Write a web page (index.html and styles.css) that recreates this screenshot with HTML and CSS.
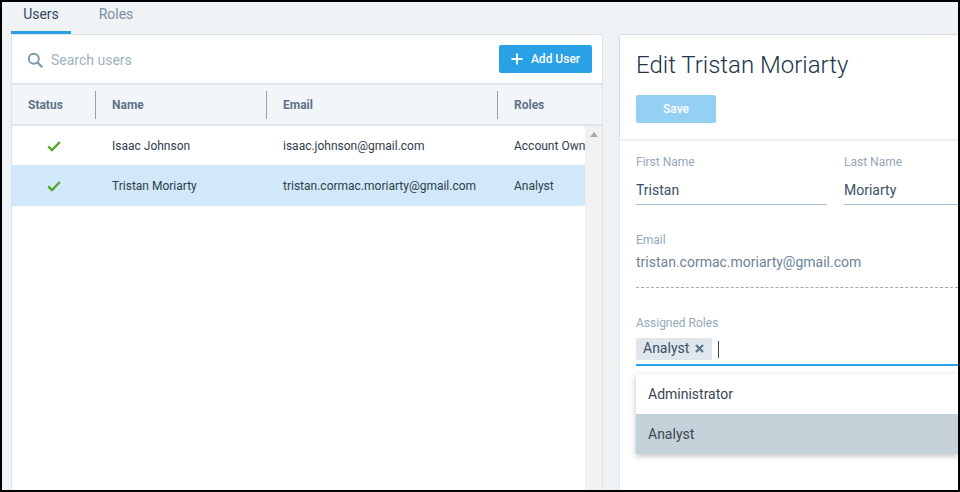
FILE: index.html
```html
<!DOCTYPE html>
<html lang="en">
<head>
<meta charset="utf-8">
<title>Users</title>
<link rel="stylesheet" href="styles.css">
</head>
<body>
<div class="frame">
  <nav class="tabs">
    <a class="tab active">Users</a>
    <a class="tab">Roles</a>
  </nav>
  <main class="columns">
    <section class="list-panel">
      <div class="toolbar">
        <label class="search">
          <svg class="search-icon" width="16" height="16" viewBox="0 0 16 16"><circle cx="6.8" cy="6.8" r="5" fill="none" stroke="#7f9ab0" stroke-width="2"/><path d="M10.6 10.6 L14.6 14.6" stroke="#7f9ab0" stroke-width="2.2" stroke-linecap="round"/></svg>
          <span>Search users</span>
        </label>
        <button class="btn-add">
          <svg width="12" height="12" viewBox="0 0 12 12"><path d="M6 .5v11M.5 6h11" stroke="#fff" stroke-width="1.8"/></svg>
          <span>Add User</span>
        </button>
      </div>
      <div class="grid-head">
        <div class="hcell">Status</div>
        <div class="hcell">Name</div>
        <div class="hcell">Email</div>
        <div class="hcell last">Roles</div>
      </div>
      <div class="grid-body">
        <div class="rows">
          <div class="row">
            <div class="cell status"><svg width="14" height="12" viewBox="0 0 14 12"><path d="M1.2 6.4 L5 10 L12.8 2" fill="none" stroke="#5aa62a" stroke-width="2.4"/></svg></div>
            <div class="cell">Isaac Johnson</div>
            <div class="cell">isaac.johnson@gmail.com</div>
            <div class="cell">Account Owner</div>
          </div>
          <div class="row selected">
            <div class="cell status"><svg width="14" height="12" viewBox="0 0 14 12"><path d="M1.2 6.4 L5 10 L12.8 2" fill="none" stroke="#5aa62a" stroke-width="2.4"/></svg></div>
            <div class="cell">Tristan Moriarty</div>
            <div class="cell">tristan.cormac.moriarty@gmail.com</div>
            <div class="cell">Analyst</div>
          </div>
        </div>
        <div class="scrollbar"><i class="arrow"></i></div>
      </div>
    </section>
    <section class="edit-panel">
      <header class="edit-head">
        <h1>Edit Tristan Moriarty</h1>
        <button class="btn-save">Save</button>
      </header>
      <form class="edit-form">
        <div class="name-row">
          <div class="field first">
            <div class="label">First Name</div>
            <div class="value">Tristan</div>
          </div>
          <div class="field last-name">
            <div class="label">Last Name</div>
            <div class="value">Moriarty</div>
          </div>
        </div>
        <div class="email-field">
          <div class="label">Email</div>
          <div class="value muted">tristan.cormac.moriarty@gmail.com</div>
        </div>
        <div class="roles-field">
          <div class="label">Assigned Roles</div>
          <div class="chips">
            <span class="chip">Analyst <svg width="9" height="9" viewBox="0 0 9 9"><path d="M1 1l7 7M8 1l-7 7" stroke="#5f7890" stroke-width="2.4"/></svg></span>
            <i class="caret"></i>
          </div>
          <ul class="menu">
            <li>Administrator</li>
            <li class="hot">Analyst</li>
          </ul>
        </div>
      </form>
    </section>
  </main>
</div>
</body>
</html>
```
FILE: styles.css
```css
* { box-sizing: border-box; }
html, body { margin: 0; height: 100%; }
body { font-family: Roboto, "Liberation Sans", sans-serif; overflow: hidden; }
.frame {
  width: 960px; height: 492px;
  border: 2px solid #000;
  background: #eff3f5;
  display: flex; flex-direction: column;
  overflow: hidden;
}
.tabs { display: flex; height: 32px; padding-left: 9px; flex: none; }
.tab { width: 60px; height: 32px; font-size: 14px; line-height: 25px; color: #7d8ea3; text-align: center; border-bottom: 3px solid transparent; margin-right: 15px; }
.tab.active { color: #34495e; border-bottom-color: #2aa0e6; }
.columns { flex: 1; display: flex; gap: 16px; padding-left: 9px; min-height: 0; }
.list-panel {
  width: 592px; background: #fff;
  border: 1px solid #dbe4ea; border-bottom: 0;
  display: flex; flex-direction: column;
}
.toolbar { height: 50px; border-bottom: 2px solid #dfe6eb; display: flex; align-items: center; justify-content: space-between; padding: 0 10px 0 16px; flex: none; }
.search { display: flex; align-items: center; gap: 7px; font-size: 14px; color: #9db2c4; padding-top: 1px; }
.search-icon { margin-top: 1px; margin-left: -1px; margin-right: 1px; }
.btn-add { width: 93px; height: 28px; background: #2aa0e6; border: 0; border-radius: 2px; color: #fff; font: 500 12px Roboto, sans-serif; display: flex; align-items: center; justify-content: center; gap: 8px; padding: 0; }
.grid-head { height: 41px; flex: none; background: #f3f6f9; border-bottom: 2px solid #dfe6eb; display: grid; grid-template-columns: 84px 171px 231px 1fr; align-items: center; }
.hcell { height: 28px; line-height: 28px; padding-left: 16px; font-size: 12px; font-weight: 700; color: #5f7288; border-right: 1px solid #8ea3b5; }
.hcell.last { border-right: 0; }
.grid-body { flex: 1; display: flex; min-height: 0; }
.rows { width: 573px; overflow: hidden; }
.row { height: 39px; display: grid; grid-template-columns: 84px 171px 231px 87px; align-items: center; font-size: 12px; color: #2f3d4c; }
.row.selected { background: #d0e8f7; height: 41px; }
.cell { padding-left: 16px; white-space: nowrap; overflow: hidden; }
.cell.status { padding-left: 35px; display: flex; }
.scrollbar { flex: 1; background: #f1f1f1; display: flex; justify-content: center; padding-top: 6px; }
.arrow { width: 0; height: 0; border: 4px solid transparent; border-top: 0; border-bottom: 5px solid #a8a8a8; }
.edit-panel { flex: 1; background: #fff; border-top: 1px solid #dbe4ea; border-left: 1px solid #e3e9ee; border-top-left-radius: 3px; min-width: 0; }
.edit-head { height: 104px; padding: 15px 0 0 16px; box-shadow: 0 1px 3px rgba(0,0,0,.12); }
.edit-head h1 { margin: 0; font-size: 24px; font-weight: 300; line-height: 30px; color: #22354a; }
.btn-save { display: block; width: 80px; height: 28px; margin-top: 15px; background: #93d0f3; border: 0; border-radius: 2px; color: #fff; font: 500 12px Roboto, sans-serif; }
.edit-form { padding: 16px 0 0 16px; }
.name-row { display: flex; gap: 17px; }
.field.first { width: 191px; }
.field.last-name { flex: 1; }
.label { font-size: 12px; line-height: 14px; color: #93a8ba; }
.value { font-size: 14px; line-height: 20px; color: #3a4f64; }
.field .value { margin-top: 11px; height: 25px; border-bottom: 1px solid #a9bccb; }
.email-field { margin-top: 28px; height: 55px; border-bottom: 1px dashed #9aacba; }
.email-field .value { margin-top: 5px; }
.value.muted { color: #6d8497; }
.roles-field { margin-top: 28px; position: relative; }
.chips { margin-top: 8px; height: 28px; border-bottom: 2px solid #2aa0e6; display: flex; gap: 6px; }
.chip { height: 22px; width: 76px; padding-left: 7px; background: #dfe6ec; border-radius: 2px; font-size: 14px; line-height: 20px; color: #3a4f64; }
.chip svg { margin-left: 2px; }
.caret { width: 1px; height: 17px; margin-top: 3px; background: #34495e; }
.menu { position: absolute; left: 0; right: 0; top: 58px; margin: 0; padding: 0; list-style: none; background: #fff; box-shadow: 0 2px 6px rgba(0,0,0,.25); font-size: 14px; color: #3a4753; }
.menu li { height: 40px; line-height: 40px; padding-left: 12px; }
.menu .hot { background: #c5d1d9; }
```
